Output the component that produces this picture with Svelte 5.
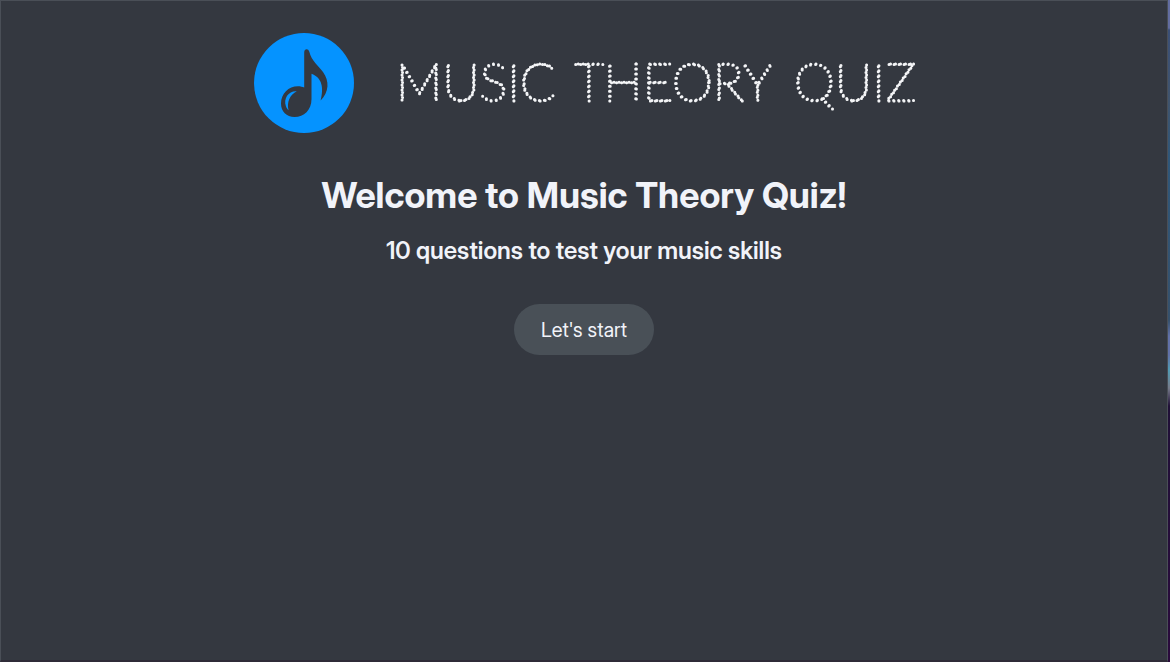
<script>
  let started = $state(false);
</script>

<div class="desktop">
  <main class="window">
    <header>
      <svg class="logo" viewBox="0 0 100 100" aria-hidden="true">
        <circle cx="50" cy="50" r="50" fill="#0593ff" />
        <path
          fill="#343840"
          d="M50.2 19.5C50.2 15.5 54.4 15.4 55.3 18.8C57.5 28 64.5 33 69 39C75.5 48 75.200 59 66.600 67.500C68.800 59 70.500 45.500 57.500 40.700V66C57.500 77 50 84 40.500 84C32.500 84 27 78.500 27 70.500C27 60.500 34.500 53.200 44 53.200C46.500 53.200 48.500 53.800 50.200 54.600Z"
        />
        <path fill="#0593ff" d="M42.800 58.200C35 57.500 29 65 32 73.500C32.400 74.600 33.500 76.500 34.600 77.200C32.500 69 36 61.500 42.800 58.200Z" />
      </svg>
      <h1>
        <svg class="wordmark" viewBox="0 0 514 60">
          <text y="48"><tspan x="-4">MUSIC</tspan> <tspan x="174">THEORY</tspan> <tspan x="394">QUIZ</tspan></text>
        </svg>
      </h1>
    </header>

    <h2>Welcome to Music Theory Quiz!</h2>
    <h3>10 questions to test your music skills</h3>
    <button type="button" aria-pressed={started} onclick={() => (started = true)}>Let's start</button>
  </main>
</div>

<style>
  :global(body) {
    background: #260d34;
  }
  .desktop {
    box-sizing: border-box;
    min-height: 100vh;
    display: flex;
    padding-right: 2px;
    background: linear-gradient(#626da0 0 28px, #3b5077 30px, #40546d 100px, #2f577a 160px, #36516c 320px, #6171a8 336px, #6171a8 355px, #519bb4 370px, #777c8b 388px, #201037 406px, #2a0a3c 100%);
  }
  .window {
    flex: 1;
    box-sizing: border-box;
    display: flex;
    flex-direction: column;
    align-items: center;
    padding-top: 32px;
    border: 1px solid #4a4f57;
    border-bottom: 2px solid #2f2b38;
    background: #343840;
    color: #f1f3f9;
    font-family: "Inter Display", Inter, sans-serif;
  }
  header {
    display: flex;
    align-items: center;
    gap: 46px;
  }
  .logo {
    width: 100px;
    height: 100px;
  }
  h1, h2, h3 {
    margin: 0;
  }
  h1 {
    display: flex;
  }
  .wordmark {
    width: 514px;
    height: 60px;
    overflow: visible;
  }
  .wordmark text {
    font-family: Lato, sans-serif;
    font-weight: 100;
    font-size: 52px;
    fill: none;
    stroke: #f4f5f7;
    stroke-width: 3px;
    stroke-linecap: round;
    stroke-dasharray: 0 5;
  }
  h2 {
    margin-top: 40px;
    font-size: 36px;
    line-height: 44px;
    font-weight: 700;
  }
  h3 {
    margin-top: 20px;
    font-size: 24px;
    line-height: 28px;
    font-weight: 600;
  }
  button {
    margin-top: 39px;
    padding: 14px 27px 12px;
    border: 0;
    border-radius: 26px;
    background: #495057;
    color: inherit;
    font-family: inherit;
    font-size: 20px;
    line-height: 25px;
    cursor: pointer;
  }
</style>
